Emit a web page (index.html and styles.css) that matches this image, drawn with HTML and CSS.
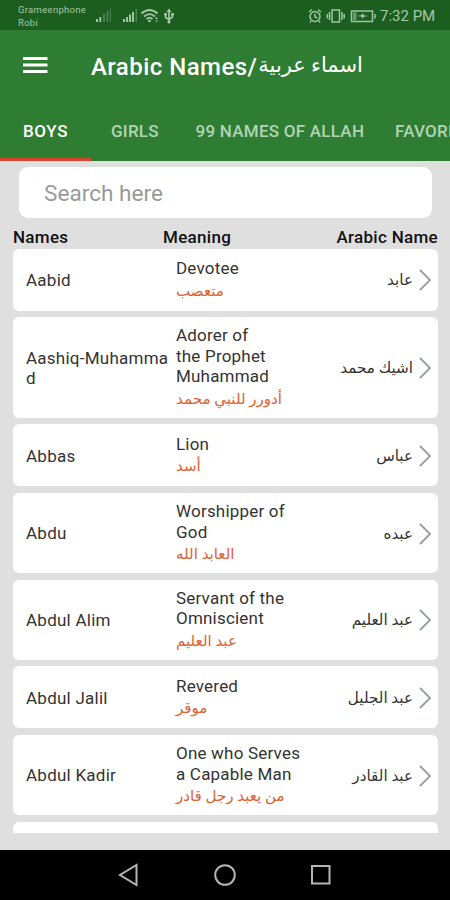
FILE: index.html
```html
<!DOCTYPE html>
<html lang="en">
<head>
<meta charset="utf-8">
<title>Arabic Names</title>
<link rel="stylesheet" href="styles.css">
</head>
<body>
<div class="status">
  <div class="carrier">Grameenphone<br>Robi</div>
  <svg class="sig" width="84" height="18" viewBox="0 0 84 18">
    <g fill="#9fc4a0"><path d="M1 11h2v3H1zM4.300 9h2v5h-2z"/><path opacity=".35" d="M8 6h2v8H8zM11.500 3h2v11h-2zM15 1h1v13h-1z"/>
    <path d="M28 11h2v3h-2zM31 9h2v5h-2zM34 6.500h2V14h-2zM37 4h2v10h-2z"/><path opacity=".4" d="M40.500 1h1.500v13h-1.500z"/></g>
    <g fill="none" stroke="#a5c9a6" stroke-width="1.700"><path d="M46.500 5.500q8-7 16 0M49 8.500q5.500-4.700 11 0M51.500 11q3-2.300 6 0"/><path d="M74 2v12M70.500 6v3.500l3.500 2 3.500-2.500V6"/></g>
    <g fill="#a5c9a6"><circle cx="54.500" cy="13" r="1.300"/><path d="m60 11 1.500-2 1.500 2zM60 12.500h3L61.500 14zM71.500 4 74 .5 76.500 4zM69.200 5h2.600v2.600h-2.600zM76.200 5h2.600v2.600h-2.600z"/><circle cx="74" cy="14" r="1.600"/></g>
  </svg>
  <svg class="power" width="70" height="16" viewBox="0 0 70 16" fill="none" stroke="#9fc4a0" stroke-width="1.500">
    <circle cx="7" cy="8.500" r="5"/><path d="M7 5.500V9l2.500 1M1 4l3-2.500M10 1.500 13 4M3 13l-1 1.500M11 13l1 1.500"/>
    <rect x="24" y="2" width="7.500" height="12"/><path d="M21.500 4v8M34 4v8M19.300 6v4.500M36.200 6v4.500"/>
    <rect x="43.500" y="3" width="21" height="10.500"/><path d="M67 6v4.500"/><path fill="#9fc4a0" stroke="none" opacity=".6" d="M45 4.500h3.500v7.500H45z"/><path fill="#9fc4a0" stroke="none" d="M49 8l4-.8 2-2 .8 2L60 8l-4 .8-1.500 2-1-2z"/>
  </svg>
  <span class="time">7:32 PM</span>
</div>
<header class="appbar">
  <svg width="25" height="18" viewBox="0 0 25 18"><path fill="#fff" d="M0 1h24.500v3H0zM0 7.500h24.500v3H0zM0 14h24.500v3H0z"/></svg>
  <h1>Arabic Names/<span class="title-ar" dir="rtl">اسماء عربية</span></h1>
</header>
<nav class="tabs">
  <span class="tab active">BOYS</span><span class="tab">GIRLS</span><span class="tab">99 NAMES OF ALLAH</span><span class="tab">FAVORITES</span>
</nav>
<main>
  <div class="search">Search here</div>
  <div class="heads"><b>Names</b><b>Meaning</b><b>Arabic Name</b></div>
  <div class="list">
    <div class="card"><div class="name">Aabid</div><div class="mean">Devotee<bdi>متعصب</bdi></div><div class="ar" dir="rtl">عابد</div><svg class="chev" viewBox="0 0 12 22"><path d="M1 1l10 10L1 21"/></svg></div>
    <div class="card"><div class="name">Aashiq-Muhammad</div><div class="mean">Adorer of<br>the Prophet<br>Muhammad<bdi>أدورر للنبي محمد</bdi></div><div class="ar" dir="rtl">اشيك محمد</div><svg class="chev" viewBox="0 0 12 22"><path d="M1 1l10 10L1 21"/></svg></div>
    <div class="card"><div class="name">Abbas</div><div class="mean">Lion<bdi>أسد</bdi></div><div class="ar" dir="rtl">عباس</div><svg class="chev" viewBox="0 0 12 22"><path d="M1 1l10 10L1 21"/></svg></div>
    <div class="card"><div class="name">Abdu</div><div class="mean">Worshipper of<br>God<bdi>العابد الله</bdi></div><div class="ar" dir="rtl">عبده</div><svg class="chev" viewBox="0 0 12 22"><path d="M1 1l10 10L1 21"/></svg></div>
    <div class="card"><div class="name">Abdul Alim</div><div class="mean">Servant of the<br>Omniscient<bdi>عبد العليم</bdi></div><div class="ar" dir="rtl">عبد العليم</div><svg class="chev" viewBox="0 0 12 22"><path d="M1 1l10 10L1 21"/></svg></div>
    <div class="card"><div class="name">Abdul Jalil</div><div class="mean">Revered<bdi>موقر</bdi></div><div class="ar" dir="rtl">عبد الجليل</div><svg class="chev" viewBox="0 0 12 22"><path d="M1 1l10 10L1 21"/></svg></div>
    <div class="card"><div class="name">Abdul Kadir</div><div class="mean">One who Serves<br>a Capable Man<bdi>من يعبد رجل قادر</bdi></div><div class="ar" dir="rtl">عبد القادر</div><svg class="chev" viewBox="0 0 12 22"><path d="M1 1l10 10L1 21"/></svg></div>
    <div class="card"></div>
  </div>
</main>
<footer class="navbar">
  <svg width="22" height="24" viewBox="0 0 22 24"><path d="M18.500 2v20L2 12z"/></svg>
  <svg width="24" height="24" viewBox="0 0 24 24"><circle cx="12" cy="12" r="9.800"/></svg>
  <svg width="22" height="24" viewBox="0 0 22 24"><rect x="2" y="3" width="17.500" height="17.500"/></svg>
</footer>
</body>
</html>
```
FILE: styles.css
```css
* { box-sizing: border-box; }
body {
  margin: 0;
  width: 450px;
  height: 900px;
  overflow: hidden;
  display: flex;
  flex-direction: column;
  background: #dfdfdf;
  font-family: Roboto, "DejaVu Sans", sans-serif;
}
svg { display: block; flex: none; }
.status {
  height: 30px;
  flex: none;
  display: flex;
  background: #1b5e20;
  color: #a5c9a6;
  padding-left: 18px;
}
.carrier { width: 77px; font-size: 9.500px; line-height: 13px; padding-top: 3px; letter-spacing: .3px; }
.sig { margin-top: 8px; }
.power { margin: 8px 0 0 129px; }
.time { margin-left: 2px; font-size: 15px; line-height: 33px; white-space: nowrap; }
.appbar {
  height: 71px;
  flex: none;
  display: flex;
  align-items: center;
  background: #2e7d32;
  padding: 0 0 1px 23px;
  color: #fff;
}
h1 { margin: 3px 0 0 43px; font-size: 24px; font-weight: 500; line-height: 30px; white-space: nowrap; display: flex; letter-spacing: .45px; }
.title-ar { font-size: 21px; font-weight: 400; line-height: 26px; letter-spacing: 0; margin-left: 1px; }
.tabs { height: 60px; flex: none; display: flex; background: #2e7d32; overflow: hidden; }
.tab {
  flex: none;
  padding: 0 15.500px;
  line-height: 61px;
  height: 60px;
  font-size: 17px;
  letter-spacing: .25px;
  font-weight: 500;
  color: #b4d3b5;
  white-space: nowrap;
}
.tab:nth-child(1) { width: 91px; padding: 0 0 0 23px; letter-spacing: .6px; }
.tab:nth-child(2) { width: 89px; padding: 0 0 0 20px; }
.tab:nth-child(3) { width: 199.500px; }
.tab.active { color: #fff; border-bottom: 3px solid #d8452f; }
main { height: 689px; flex: none; }
.search {
  margin: 6px 18px 0 19px;
  height: 51px;
  background: #fff;
  border-radius: 9px;
  padding-left: 25px;
  font-size: 22.600px;
  line-height: 53px;
  color: #999;
}
.heads {
  display: grid;
  grid-template-columns: 150px 1fr auto;
  height: 30.500px;
  padding: 9px 12px 0 13px;
  font-size: 17px;
  letter-spacing: .3px;
  line-height: 21px;
  color: #111;
}
.heads b { font-weight: 500; }
.list { height: 584px; overflow: hidden; padding: 0 12px 0 13px; display: flex; flex-direction: column; gap: 6.500px; }
.card {
  flex: none;
  min-height: 62px;
  display: grid;
  grid-template-columns: 150px 130px 1fr 12px;
  align-items: center;
  background: #fff;
  border-radius: 6px;
  padding: 8.400px 7px 6.900px 13px;
  color: #333;
}
.name { font-size: 17px; line-height: 20.500px; word-break: break-all; width: 146px; letter-spacing: .25px; }
.mean { font-size: 17px; line-height: 20.500px; white-space: nowrap; letter-spacing: .2px; }
.mean bdi { display: block; text-align: left; color: #e0602f; font-size: 15.100px; line-height: 24px; height: 24px; letter-spacing: 0; }
.ar { font-size: 15.200px; line-height: 22px; white-space: nowrap; text-align: right; margin-right: 6px; }
.chev { width: 12px; height: 22px; fill: none; stroke: #96a19d; stroke-width: 1.900; }
.navbar {
  height: 50px;
  flex: none;
  display: flex;
  align-items: center;
  background: #000;
  padding-left: 118px;
  gap: 73px;
}
.navbar svg { fill: none; stroke: #b5b5b5; stroke-width: 2; }
```
